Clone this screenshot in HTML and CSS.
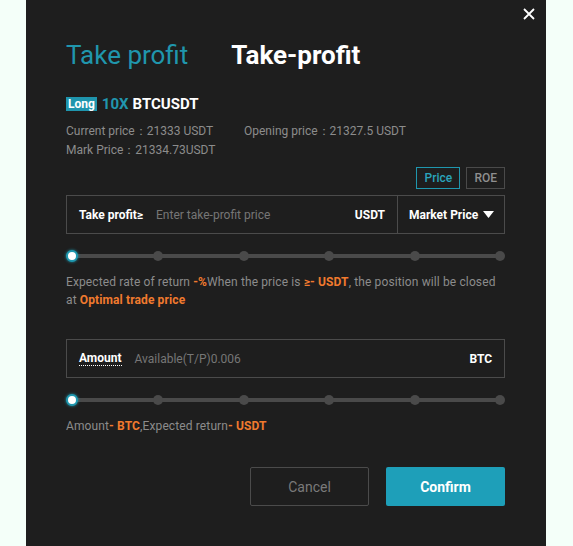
FILE: index.html
```html
<!DOCTYPE html>
<html>
<head>
<meta charset="utf-8">
<link rel="stylesheet" href="styles.css">
</head>
<body>
<div class="modal">
  <button class="close" aria-label="close">
    <svg width="12" height="12" viewBox="0 0 12 12"><path d="M1 1L11 11M11 1L1 11" stroke="#fff" stroke-width="1.8" fill="none"/></svg>
  </button>
  <div class="tabs">
    <span class="tab tab-active">Take profit</span>
    <span class="tab tab-main">Take-profit</span>
  </div>
  <div class="symbol">
    <span class="badge">Long</span>
    <span class="lev">10X</span>
    <span class="pair">BTCUSDT</span>
  </div>
  <div class="info">
    <div class="info-row">
      <span class="info-a">Current price：21333 USDT</span>
      <span class="info-b">Opening price：21327.5 USDT</span>
    </div>
    <div class="info-row">
      <span class="info-a">Mark Price：21334.73USDT</span>
    </div>
  </div>
  <div class="toggles">
    <span class="toggle toggle-on">Price</span>
    <span class="toggle">ROE</span>
  </div>
  <div class="field">
    <div class="field-main">
      <span class="field-label">Take profit≥</span>
      <span class="field-placeholder">Enter take-profit price</span>
      <span class="field-unit">USDT</span>
    </div>
    <div class="field-select">
      <span>Market Price</span>
      <svg width="11" height="7" viewBox="0 0 11 7"><path d="M0 0H11L5.5 7Z" fill="#fff"/></svg>
    </div>
  </div>
  <div class="slider">
    <div class="track"></div>
    <div class="dots">
      <span class="dot dot-on"></span><span class="dot"></span><span class="dot"></span><span class="dot"></span><span class="dot"></span><span class="dot"></span>
    </div>
  </div>
  <p class="note">Expected rate of return <b class="hl">-%</b>When the price is <b class="hl">≥- USDT</b>, the position will be closed at <b class="hl">Optimal trade price</b></p>
  <div class="field field2">
    <div class="field-main">
      <span class="field-label dotted">Amount</span>
      <span class="field-placeholder">Available(T/P)0.006</span>
      <span class="field-unit">BTC</span>
    </div>
  </div>
  <div class="slider">
    <div class="track"></div>
    <div class="dots">
      <span class="dot dot-on"></span><span class="dot"></span><span class="dot"></span><span class="dot"></span><span class="dot"></span><span class="dot"></span>
    </div>
  </div>
  <p class="note note2">Amount<b class="hl">- BTC</b>,Expected return<b class="hl">- USDT</b></p>
  <div class="actions">
    <button class="btn btn-cancel">Cancel</button>
    <button class="btn btn-confirm">Confirm</button>
  </div>
</div>
</body>
</html>
```
FILE: styles.css
```css
* { box-sizing: border-box; }
html, body { margin: 0; padding: 0; }
body {
  background: #f4fff9;
  font-family: "Roboto", "Liberation Sans", sans-serif;
  height: 546px;
  overflow: hidden;
}
.modal {
  position: relative;
  margin-left: 26px;
  width: 520px;
  height: 546px;
  background: #1e1e1e;
  padding: 39px 41px 0 40px;
}
.close {
  position: absolute;
  top: 7px;
  right: 10px;
  background: none;
  border: 0;
  padding: 0;
  width: 14px;
  height: 14px;
  display: flex;
  align-items: center;
  justify-content: center;
}
.tabs {
  display: flex;
  gap: 43px;
  height: 32px;
  align-items: center;
}
.tab {
  font-size: 26px;
  line-height: 32px;
}
.tab-active { color: #2096ad; }
.tab-main { color: #fff; font-weight: 700; }
.symbol {
  margin-top: 24px;
  display: flex;
  align-items: center;
  height: 18px;
  font-size: 15px;
  font-weight: 700;
}
.badge {
  background: #1f95ad;
  color: #fff;
  font-size: 12px;
  line-height: 14px;
  padding: 0 2px;
  margin-right: 5px;
}
.lev { color: #2196ae; margin-right: 4px; }
.pair { color: #fff; }
.info {
  margin-top: 9px;
  font-size: 12px;
  color: #8c8c8c;
  line-height: 19px;
}
.info-row { display: flex; }
.info-a { width: 178px; }
.toggles {
  margin-top: 7px;
  display: flex;
  justify-content: flex-end;
  gap: 6px;
}
.toggle {
  height: 22px;
  border: 1px solid #4a4a4a;
  color: #8f8f8f;
  font-size: 12px;
  font-weight: 500;
  display: flex;
  align-items: center;
  padding: 0 7px;
}
.toggle-on { border-color: #1f97ae; color: #2aa4bb; width: 44px; justify-content: center; }
.field {
  margin-top: 6px;
  height: 39px;
  border: 1px solid #4b4b4b;
  display: flex;
}
.field-main {
  flex: 1;
  display: flex;
  align-items: center;
  padding: 0 12px;
  font-size: 12px;
}
.field-label { color: #fff; font-weight: 700; margin-right: 13px; }
.dotted { border-bottom: 1px dotted #fff; line-height: 14px; }
.field-placeholder { color: #767676; flex: 1; }
.field-unit { color: #fff; font-weight: 700; }
.field-select {
  width: 107px;
  border-left: 1px solid #4b4b4b;
  display: flex;
  align-items: center;
  padding-left: 11px;
  gap: 5px;
  color: #fff;
  font-size: 12px;
  font-weight: 700;
}
.slider {
  position: relative;
  height: 12px;
  margin: 16px 0 0;
}
.track {
  position: absolute;
  left: 5px;
  right: 5px;
  top: 4px;
  height: 4px;
  background: #4a4a4a;
}
.dots {
  position: relative;
  display: flex;
  justify-content: space-between;
  align-items: center;
  height: 12px;
}
.dot {
  width: 10px;
  height: 10px;
  border-radius: 50%;
  background: #4a4a4a;
}
.dot-on {
  width: 12px;
  height: 12px;
  background: #fff;
  border: 2px solid #1e97ae;
  box-shadow: 0 0 3px #1e97ae;
}
.note {
  margin: 11px 0 0;
  font-size: 12px;
  line-height: 18px;
  color: #8c8c8c;
  letter-spacing: 0.12px;
}
.hl { color: #f07a2e; font-weight: 700; }
.field2 { margin-top: 30px; }
.slider2 { margin-top: 15px; }
.note2 { margin-top: 11px; }
.actions {
  margin-top: 32px;
  display: flex;
  justify-content: flex-end;
  gap: 17px;
}
.btn {
  width: 119px;
  height: 39px;
  font-family: inherit;
  font-size: 14px;
  border-radius: 2px;
}
.btn-cancel {
  background: transparent;
  border: 1px solid #4b4b4b;
  color: #7a7a7a;
}
.btn-confirm {
  background: #1e9fb9;
  border: 0;
  color: #fff;
  font-weight: 700;
}
```
